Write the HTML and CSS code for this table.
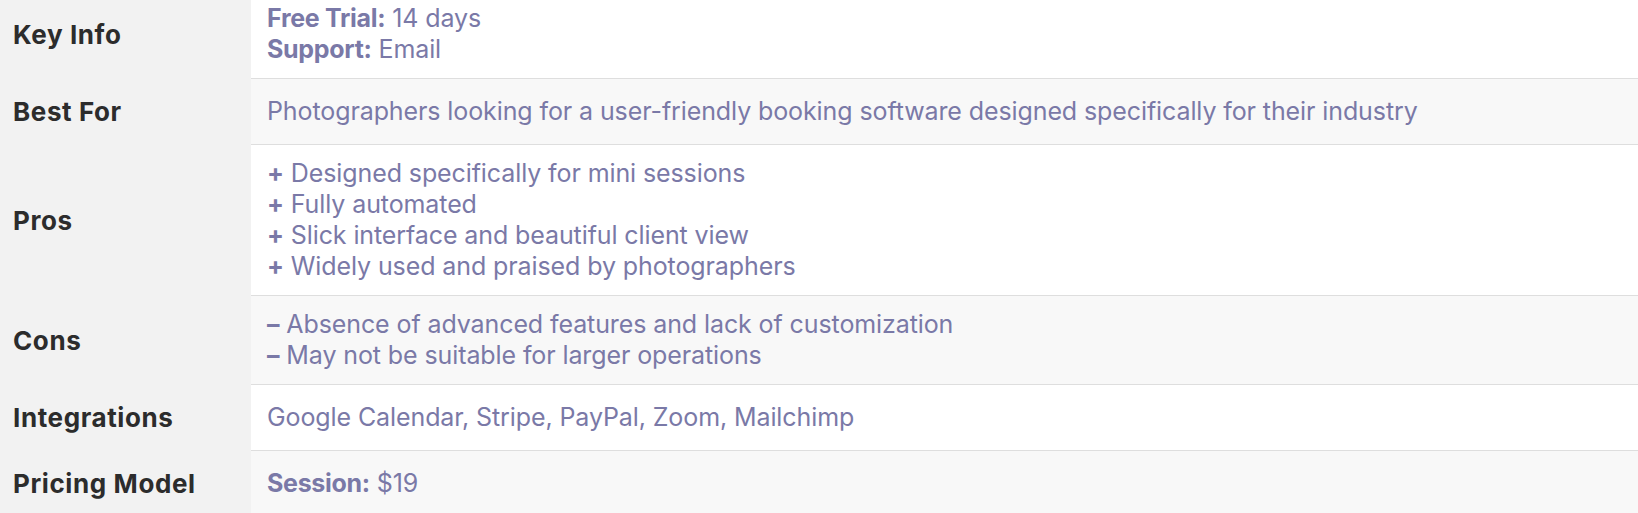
FILE: index.html
```html
<!DOCTYPE html>
<html lang="en">
<head>
<meta charset="utf-8">
<title>Key Info</title>
<link rel="stylesheet" href="styles.css">
</head>
<body>
<div class="wrap">
<table class="info">
  <tbody>
    <tr>
      <th>Key Info</th>
      <td><strong>Free Trial:</strong> 14 days<br><strong>Support:</strong> Email</td>
    </tr>
    <tr>
      <th>Best For</th>
      <td>Photographers looking for a user-friendly booking software designed specifically for their industry</td>
    </tr>
    <tr>
      <th>Pros</th>
      <td><span class="sign">+</span> Designed specifically for mini sessions<br><span class="sign">+</span> Fully automated<br><span class="sign">+</span> Slick interface and beautiful client view<br><span class="sign">+</span> Widely used and praised by photographers</td>
    </tr>
    <tr>
      <th>Cons</th>
      <td><span class="sign">–</span> Absence of advanced features and lack of customization<br><span class="sign">–</span> May not be suitable for larger operations</td>
    </tr>
    <tr>
      <th>Integrations</th>
      <td>Google Calendar, Stripe, PayPal, Zoom, Mailchimp</td>
    </tr>
    <tr>
      <th>Pricing Model</th>
      <td><strong>Session:</strong> $19</td>
    </tr>
  </tbody>
</table>
</div>
</body>
</html>
```
FILE: styles.css
```css
html, body {
  margin: 0;
  padding: 0;
  background: #ffffff;
  overflow: hidden;
}

.wrap {
  margin-top: -10px;
}

.info {
  width: 100%;
  border-collapse: collapse;
  font-family: "Inter", "Liberation Sans", sans-serif;
}

.info th {
  width: 238px;
  height: 65px;
  padding: 0 0 0 13px;
  text-align: left;
  vertical-align: middle;
  background: #f2f2f2;
  color: #2c2c2c;
  font-size: 26px;
  font-weight: 700;
  letter-spacing: 0.6px;
  border-bottom: 1px solid #f2f2f2;
}

.info td {
  padding: 13px 16px;
  vertical-align: middle;
  color: #7a79a7;
  font-size: 25px;
  line-height: 31px;
  letter-spacing: -0.1px;
  background: #ffffff;
  border-bottom: 1px solid #dedede;
}

.info tr:nth-child(even) td {
  background: #f8f8f8;
}

.info td strong {
  font-weight: 700;
  letter-spacing: -0.3px;
}

.info .sign {
  font-weight: 700;
}
```
